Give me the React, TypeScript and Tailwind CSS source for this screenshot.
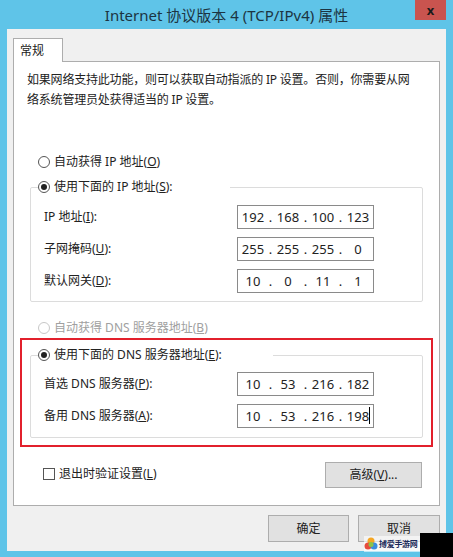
import React from "react";

const font = { fontFamily: '"Noto Sans", "Noto Sans CJK SC", sans-serif' };

const Radio = ({ checked, disabled }: { checked?: boolean; disabled?: boolean }) => (
  <span
    className={`inline-flex items-center justify-center w-[12px] h-[12px] rounded-full border bg-white mr-[4px] ${
      disabled ? "border-[#c8c8c8]" : "border-[#555]"
    }`}
  >
    {checked && <span className="w-[6px] h-[6px] rounded-full bg-[#222]" />}
  </span>
);

const IpInput = ({ parts, cursor }: { parts: string[]; cursor?: boolean }) => (
  <div className="w-[137px] h-[24px] border border-[#8a8a8a] bg-white flex items-center text-[13px] text-[#222] leading-none">
    {parts.map((p, i) => (
      <React.Fragment key={i}>
        {i > 0 && <span className="w-[5px] text-center">.</span>}
        <span className="w-[30px] text-center relative">
          {p}
          {cursor && i === 3 && <span className="absolute right-[3px] top-[-3px] w-[1px] h-[17px] bg-black" />}
        </span>
      </React.Fragment>
    ))}
  </div>
);

const Row = ({ label, parts, cursor }: { label: React.ReactNode; parts: string[]; cursor?: boolean }) => (
  <div className="flex items-center">
    <div className="w-[193px] text-[12px] text-[#222]">{label}</div>
    <IpInput parts={parts} cursor={cursor} />
  </div>
);

export default function App() {
  return (
    <div className="w-[453px] h-[557px] bg-[#5fc4e8] flex flex-col relative overflow-hidden" style={font}>
      <div className="h-[29px] relative flex items-center justify-center">
        <span className="text-[15px] text-[#1c3442] mt-[1px]">Internet 协议版本 4 (TCP/IPv4) 属性</span>
        <div className="absolute right-[7px] top-0 w-[31px] h-[20px] bg-[#c9544f] flex items-center justify-center">
          <span className="text-[13px] font-bold text-[#1a1a1a] leading-none">x</span>
        </div>
      </div>

      <div className="mx-[7px] mb-[6px] flex-1 bg-[#f0f0f0] pl-[6px] pr-[6px] pt-[9px] flex flex-col">
        <div className="w-[50px] h-[24px] border border-b-0 border-[#adadad] bg-white text-[12px] text-[#222] pl-[6px] pt-[3px] relative z-10 -mb-[1px]">
          常规
        </div>
        <div className="h-[445px] border border-[#adadad] bg-white flex flex-col px-[16px]">
          <div className="pt-[8px] -ml-[3px] text-[12px] leading-[20px] text-[#222] tracking-[-0.2px]">
            <div className="whitespace-nowrap">如果网络支持此功能，则可以获取自动指派的 IP 设置。否则，你需要从网</div>
            <div className="whitespace-nowrap">络系统管理员处获得适当的 IP 设置。</div>
          </div>

          <div className="mt-[42px] ml-[8px] h-[20px] flex items-center text-[12px] text-[#222]">
            <Radio />
            自动获得 IP 地址(<u>O</u>)
          </div>

          <fieldset className="mt-[5px] border border-[#dcdcdc] rounded-[2px] px-[13px] pt-[8px] pb-[8px] flex flex-col gap-[8px]">
            <legend className="-ml-[6px] w-[192px] h-[20px] bg-white flex items-center text-[12px] text-[#222]">
              <Radio checked />
              使用下面的 IP 地址(<u>S</u>):
            </legend>
            <Row label={<>IP 地址(<u>I</u>):</>} parts={["192", "168", "100", "123"]} />
            <Row label={<>子网掩码(<u>U</u>):</>} parts={["255", "255", "255", "0"]} />
            <Row label={<>默认网关(<u>D</u>):</>} parts={["10", "0", "11", "1"]} />
          </fieldset>

          <div className="mt-[16px] ml-[8px] h-[20px] flex items-center text-[12px] text-[#a0a0a0]">
            <Radio disabled />
            自动获得 DNS 服务器地址(<u>B</u>)
          </div>

          <div className="-mx-[10px] border-2 border-[#e2202c] px-[8px] pt-[5px] pb-[7px]">
            <fieldset className="border border-[#dcdcdc] rounded-[2px] px-[13px] pt-[7px] pb-[9px] flex flex-col gap-[8px]">
              <legend className="-ml-[6px] w-[235px] h-[20px] bg-white flex items-center text-[12px] text-[#222]">
                <Radio checked />
                使用下面的 DNS 服务器地址(<u>E</u>):
              </legend>
              <Row label={<>首选 DNS 服务器(<u>P</u>):</>} parts={["10", "53", "216", "182"]} />
              <Row label={<>备用 DNS 服务器(<u>A</u>):</>} parts={["10", "53", "216", "198"]} cursor />
            </fieldset>
          </div>

          <div className="mt-[15px] flex items-center justify-between">
            <div className="flex items-center ml-[13px] text-[12px] text-[#222] -mt-[3px]">
              <span className="w-[12px] h-[12px] border border-[#555] bg-white mr-[4px]" />
              退出时验证设置(<u>L</u>)
            </div>
            <button className="w-[97px] h-[26px] mr-[1px] bg-[#e1e1e1] border border-[#adadad] text-[12px] text-[#222]">
              高级(<u>V</u>)...
            </button>
          </div>
        </div>

        <div className="mt-[9px] flex justify-end gap-[9px]">
          <button className="w-[81px] h-[27px] bg-[#e1e1e1] border border-[#adadad] text-[12px] text-[#222]">确定</button>
          <button className="w-[82px] h-[27px] bg-[#e1e1e1] border border-[#adadad] text-[12px] text-[#222]">取消</button>
        </div>
      </div>

      <div className="absolute left-[364px] top-[536px] w-[56px] flex items-center h-[16px] bg-white/60">
        <svg width="14" height="14" viewBox="0 0 14 14" className="mr-[1px] shrink-0">
          <circle cx="7" cy="4" r="3.5" fill="#f5a623" />
          <circle cx="4" cy="9" r="3.5" fill="#e74c3c" />
          <circle cx="10" cy="9" r="3.5" fill="#3b8de0" />
          <circle cx="7" cy="7.5" r="2.5" fill="#8bc34a" />
        </svg>
        <span className="text-[8px] font-bold text-[#1a2a5a] leading-none whitespace-nowrap tracking-[-0.3px]">搏爱手游网</span>
      </div>
      <div className="absolute left-[420px] top-[533px] w-[33px] h-[24px] bg-black" />
    </div>
  );
}
